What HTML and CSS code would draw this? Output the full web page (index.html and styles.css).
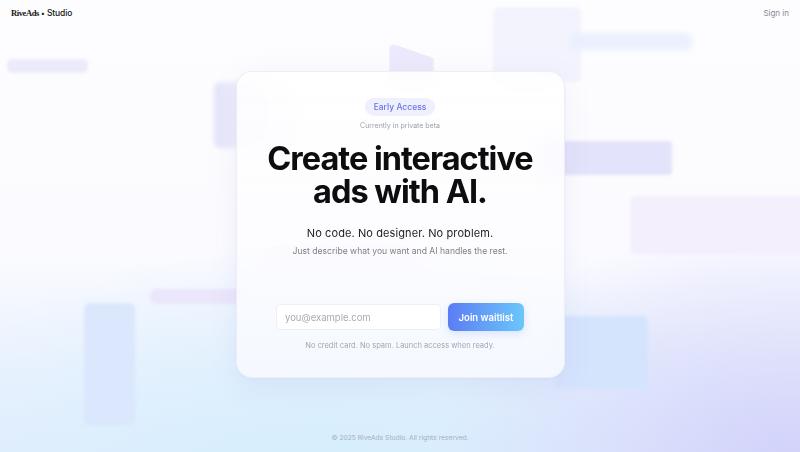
FILE: index.html
```html
<!DOCTYPE html>
<html lang="en">
<head>
<meta charset="utf-8">
<title>RiveAds Studio</title>
<link rel="stylesheet" href="styles.css">
</head>
<body>
<div class="page">
  <div class="bg" aria-hidden="true">
    <div class="shape s1"></div>
    <div class="shape s2"></div>
    <div class="shape s3"></div>
    <div class="shape s4"></div>
    <div class="shape s5"></div>
    <div class="shape s6"></div>
    <div class="shape s7"></div>
    <div class="shape s8"></div>
    <div class="shape s9"></div>
    <div class="shape s10"></div>
    <div class="shape s11"></div>
  </div>
  <header class="nav">
    <div class="brand"><span class="brand-name">RiveAds</span> <span class="dot">•</span> Studio</div>
    <a class="signin" href="#">Sign in</a>
  </header>
  <main class="main">
    <section class="card">
      <span class="pill">Early Access</span>
      <p class="beta">Currently in private beta</p>
      <h1 class="title"><span class="tl">Create interactive</span><span class="tl">ads with AI.</span></h1>
      <p class="lead">No code. No designer. No problem.</p>
      <p class="sub">Just describe what you want and AI handles the rest.</p>
      <form class="form">
        <input class="email" type="email" placeholder="you@example.com">
        <button class="btn" type="button">Join waitlist</button>
      </form>
      <p class="fine">No credit card. No spam. Launch access when ready.</p>
    </section>
  </main>
  <footer class="footer">© 2025 RiveAds Studio. All rights reserved.</footer>
</div>
</body>
</html>
```
FILE: styles.css
```css
* { box-sizing: border-box; }
html, body { margin: 0; height: 100%; }
body {
  font-family: Inter, "Noto Sans", sans-serif;
  color: #111;
  overflow: hidden;
}
.page {
  position: relative;
  width: 800px;
  height: 452px;
  display: flex;
  flex-direction: column;
  overflow: hidden;
  background:
    radial-gradient(ellipse 360px 240px at 790px 460px, #d2d2fa 0%, rgba(214,214,250,0.6) 45%, rgba(230,230,252,0) 100%),
    radial-gradient(ellipse 520px 220px at 320px 470px, #d5eefd 0%, rgba(218,239,253,0.6) 50%, rgba(240,248,255,0) 100%),
    linear-gradient(180deg, #fdfdff 0%, #fbfbff 55%, #eef3fe 80%, #e3ecfd 100%);
}
.bg { position: absolute; inset: 0; }
.shape { position: absolute; border-radius: 6px; filter: blur(1.5px); }
.s1 { left: 7px; top: 59px; width: 81px; height: 14px; background: #ecebfb; border-radius: 5px; }
.s2 { left: 214px; top: 82px; width: 80px; height: 66px; background: linear-gradient(90deg, #e4e4fa 0%, #eeeefc 30%, rgba(245,245,255,0.3) 100%); filter: blur(2px); }
.s3 { left: 389px; top: 44px; width: 45px; height: 36px; background: #ebe9fb; clip-path: polygon(0 6%, 10% 0, 100% 40%, 100% 100%, 0 100%); border-radius: 4px; }
.s4 { left: 493px; top: 7px; width: 88px; height: 75px; background: #f2f3fd; }
.s5 { left: 570px; top: 33px; width: 122px; height: 17px; background: #eaf0fe; filter: blur(2.5px); }
.s6 { left: 540px; top: 141px; width: 132px; height: 34px; background: #e3e3fb; border-radius: 4px; }
.s7 { left: 630px; top: 196px; width: 180px; height: 58px; background: #f3effd; }
.s8 { left: 150px; top: 289px; width: 100px; height: 15px; background: #ebe6fb; }
.s9 { left: 84px; top: 303px; width: 51px; height: 122px; background: #dbe7fc; }
.s10 { left: 555px; top: 316px; width: 93px; height: 73px; background: #d5e4fd; }
.s11 { left: 270px; top: 256px; width: 140px; height: 30px; background: #eef0fc; filter: blur(5px); }

.nav {
  position: relative;
  display: flex;
  justify-content: space-between;
  align-items: center;
  padding: 2px 11px 0;
  height: 24px;
  font-size: 8.5px;
}
.brand { color: #151515; font-weight: 500; letter-spacing: -0.1px; }
.brand-name { font-family: "Liberation Serif", serif; font-weight: 700; letter-spacing: -0.4px; font-size: 8.5px; }
.dot { font-size: 7px; margin: 0; }
.signin { color: #8a8a94; text-decoration: none; font-size: 8px; }

.main {
  position: relative;
  flex: 1;
  display: flex;
  justify-content: center;
  align-items: flex-start;
  padding-top: 47px;
}
.card {
  width: 329px;
  height: 307px;
  border-radius: 16px;
  background: linear-gradient(180deg, rgba(255,255,255,0.82) 0%, rgba(252,252,255,0.86) 60%, rgba(246,249,255,0.92) 100%);
  backdrop-filter: blur(10px);
  border: 1px solid rgba(235,236,250,0.9);
  box-shadow: 0 8px 28px rgba(120,130,200,0.10), 0 1px 3px rgba(120,130,200,0.06);
  display: flex;
  flex-direction: column;
  align-items: center;
  padding-top: 26px;
}
.pill {
  display: inline-block;
  background: #eef0fd;
  color: #6c73e6;
  font-size: 8.5px;
  font-weight: 500;
  padding: 4px 9px;
  border-radius: 10px;
  line-height: 10px;
}
.beta {
  margin: 5px 0 0;
  font-size: 7px;
  color: #9d9daa;
  line-height: 10px;
}
.title {
  margin: 12px 0 0;
  font-size: 32.5px;
  line-height: 32.5px;
  font-weight: 700;
  letter-spacing: -1px;
  text-align: center;
  color: #0d0d10;
  display: flex;
  flex-direction: column;
  align-items: center;
}
.tl { display: block; height: 32.5px; }
.lead {
  margin: 17px 0 0;
  font-size: 11px;
  line-height: 16px;
  color: #1c1c22;
  letter-spacing: 0.1px;
}
.sub {
  margin: 4px 0 0;
  font-size: 8.6px;
  line-height: 12px;
  color: #7d7d88;
}
.form {
  margin-top: 46px;
  display: flex;
  gap: 7px;
  align-items: center;
}
.email {
  width: 165px;
  height: 26px;
  border: 1px solid #eef0f7;
  border-radius: 4px;
  background: #fff;
  padding: 0 8px;
  font: inherit;
  font-size: 9.5px;
  color: #333;
  outline: none;
}
.email::placeholder { color: #a9a9b3; }
.btn {
  width: 76px;
  height: 28px;
  border: 0;
  border-radius: 6px;
  background: linear-gradient(90deg, #5c7cf4 0%, #6bc7fb 100%);
  color: #fff;
  font: inherit;
  font-size: 9.5px;
  font-weight: 600;
  box-shadow: 0 3px 8px rgba(100,140,240,0.2);
}
.fine {
  margin: 10px 0 0;
  font-size: 7.5px;
  color: #a4a4ae;
  line-height: 10px;
}
.footer {
  position: relative;
  text-align: center;
  font-size: 6.7px;
  color: #a6aec2;
  padding-bottom: 10px;
}
```
